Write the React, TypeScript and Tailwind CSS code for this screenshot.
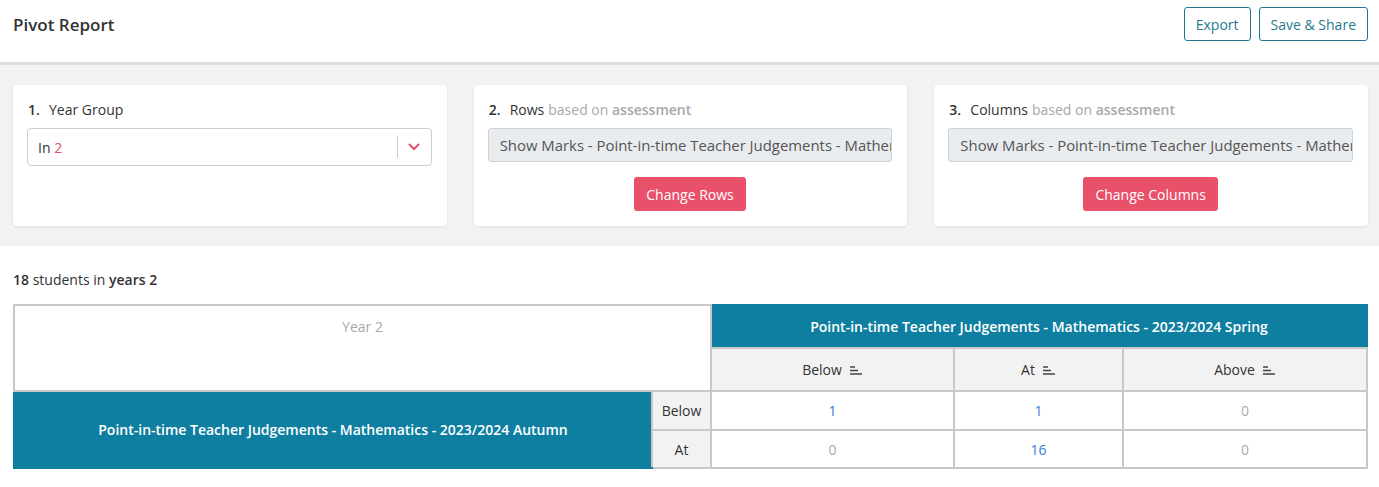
import React from "react";

const teal = "bg-[#0f7fa1]";

function SortIcon() {
  return (
    <svg width="14" height="12" viewBox="0 0 14 12" className="inline-block ml-[7px] -mt-[2px]" fill="none">
      <path d="M1 3h5M1 6.5h8M1 10h12" stroke="#444" strokeWidth="1.3" />
    </svg>
  );
}

function Chevron() {
  return (
    <svg width="12" height="8" viewBox="0 0 12 8" fill="none">
      <path d="M1.5 1.5L6 6l4.5-4.5" stroke="#e0506a" strokeWidth="2" strokeLinecap="round" />
    </svg>
  );
}

function Card({ children }: { children: React.ReactNode }) {
  return (
    <div className="bg-white rounded-[4px] shadow-[0_1px_3px_rgba(0,0,0,0.08)] pt-[15px] pb-[15px] pl-[14px] pr-[15px] flex flex-col">
      {children}
    </div>
  );
}

function StepLabel({ n, title, note }: { n: string; title: string; note?: boolean }) {
  return (
    <div className="text-[14px] leading-[20px] text-[#333] flex items-center">
      <span className="font-semibold w-[22px] pl-[1px]">{n}</span>
      <span>{title}</span>
      {note && (
        <span className="text-[#a8a8a8] ml-[4px]">
          based on <span className="font-semibold">assessment</span>
        </span>
      )}
    </div>
  );
}

function ShowBox({ text }: { text: string }) {
  return (
    <div className="mt-[8px] h-[34px] bg-[#e9ecef] border border-[#cdd2d8] rounded-[3px] px-[11px] text-[14.9px] text-[#555] flex items-center overflow-hidden whitespace-nowrap">
      {text}
    </div>
  );
}

function RedButton({ label }: { label: string }) {
  return (
    <div className="flex justify-center mt-[15px]">
      <button className="h-[34px] px-[12px] rounded-[3px] bg-[#e9506a] text-white text-[14px]">{label}</button>
    </div>
  );
}

function Val({ v }: { v: number }) {
  return <span className={v > 0 ? "text-[#3a7bd5]" : "text-[#aaa]"}>{v}</span>;
}

export default function App() {
  const cell = "border-2 border-[#c8c8c8] text-center";
  return (
    <div className="min-h-screen bg-white text-[#333]" style={{ fontFamily: '"Open Sans", "Noto Sans", sans-serif' }}>
      {/* header */}
      <div className="h-[65px] flex items-center justify-between pl-[13px] pr-[11px] border-b-[3px] border-[#dedede]">
        <h1 className="text-[17px] font-semibold text-[#333] -mt-[12px]">Pivot Report</h1>
        <div className="flex gap-[8px] -mt-[14px]">
          <button className="h-[34px] px-[11px] border border-[#1f7a91] rounded-[3px] text-[14px] text-[#1f7a91]">Export</button>
          <button className="h-[34px] px-[11px] border border-[#1f7a91] rounded-[3px] text-[14px] text-[#1f7a91]">Save &amp; Share</button>
        </div>
      </div>

      {/* settings */}
      <div className="bg-[#f3f2f2] pt-[20px] pb-[20px] pl-[13px] pr-[11px] grid grid-cols-3 gap-[27px]">
        <Card>
          <StepLabel n="1." title="Year Group" />
          <div className="mt-[8px] h-[38px] border border-[#cccccc] rounded-[4px] flex items-center">
            <span className="flex-1 pl-[10px] text-[14px] text-[#333]">
              In <span className="text-[#e0506a]">2</span>
            </span>
            <span className="w-px h-[22px] bg-[#ccc]" />
            <span className="w-[33px] flex justify-center"><Chevron /></span>
          </div>
        </Card>
        <Card>
          <StepLabel n="2." title="Rows" note />
          <ShowBox text="Show Marks - Point-in-time Teacher Judgements - Mathematics - 2023/2024 Autumn" />
          <RedButton label="Change Rows" />
        </Card>
        <Card>
          <StepLabel n="3." title="Columns" note />
          <ShowBox text="Show Marks - Point-in-time Teacher Judgements - Mathematics - 2023/2024 Spring" />
          <RedButton label="Change Columns" />
        </Card>
      </div>

      {/* results */}
      <div className="pl-[13px] pr-[11px]">
        <p className="mt-[24px] text-[14px] leading-[20px] text-[#333]">
          <span className="font-semibold">18</span> students in <span className="font-semibold">years 2</span>
        </p>
        <table className="mt-[14px] w-full table-fixed border-collapse text-[14px]">
          <colgroup>
            <col className="w-[638px]" />
            <col className="w-[59px]" />
            <col className="w-[243px]" />
            <col className="w-[169px]" />
            <col />
          </colgroup>
          <thead>
            <tr className="h-[43px]">
              <th colSpan={2} rowSpan={2} className={`${cell} align-top pt-[10px] font-normal text-[#aaa]`}>Year 2</th>
              <th colSpan={3} className={`${cell} ${teal} text-white font-semibold border-t-[#0f7fa1] border-r-[#0f7fa1]`}>
                Point-in-time Teacher Judgements - Mathematics - 2023/2024 Spring
              </th>
            </tr>
            <tr className="h-[43px] bg-[#f3f2f2]">
              {["Below", "At", "Above"].map((h) => (
                <th key={h} className={`${cell} font-normal text-[#333]`}>
                  {h}
                  <SortIcon />
                </th>
              ))}
            </tr>
          </thead>
          <tbody>
            <tr className="h-[39px]">
              <td rowSpan={2} className={`${cell} ${teal} text-white font-semibold border-l-[#0f7fa1] border-b-[#0f7fa1]`}>
                Point-in-time Teacher Judgements - Mathematics - 2023/2024 Autumn
              </td>
              <td className={`${cell} bg-[#f3f2f2]`}>Below</td>
              <td className={cell}><Val v={1} /></td>
              <td className={cell}><Val v={1} /></td>
              <td className={cell}><Val v={0} /></td>
            </tr>
            <tr className="h-[38px]">
              <td className={`${cell} bg-[#f3f2f2]`}>At</td>
              <td className={cell}><Val v={0} /></td>
              <td className={cell}><Val v={16} /></td>
              <td className={cell}><Val v={0} /></td>
            </tr>
          </tbody>
        </table>
      </div>
    </div>
  );
}
